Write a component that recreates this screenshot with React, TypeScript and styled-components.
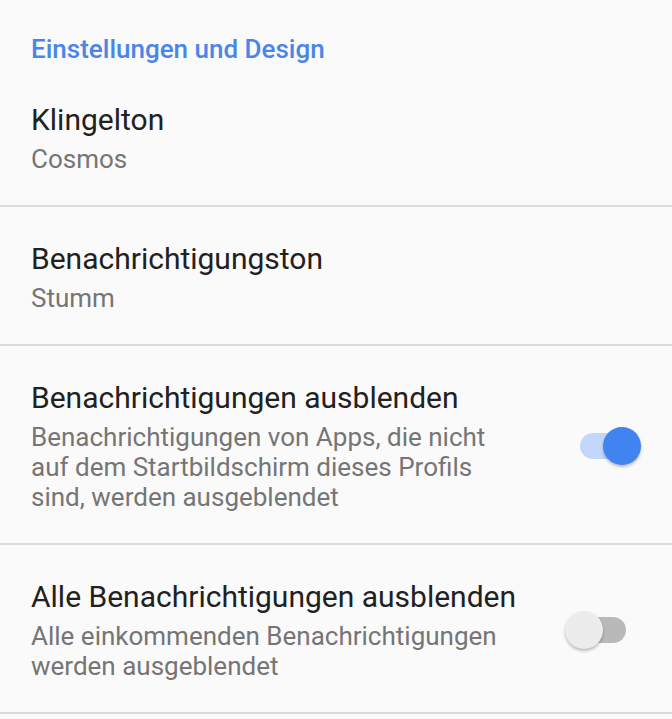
import React from 'react'
import styled, { createGlobalStyle } from 'styled-components'

const GlobalStyle = createGlobalStyle`
  html, body {
    margin: 0;
    padding: 0;
    background: #fafafa;
  }
  body {
    font-family: Roboto, "Noto Sans", Arial, sans-serif;
    -webkit-font-smoothing: antialiased;
  }
`

type Pref = {
  title: string
  summary: string[]
  toggle?: boolean
}

const prefs: Pref[] = [
  { title: 'Klingelton', summary: ['Cosmos'] },
  { title: 'Benachrichtigungston', summary: ['Stumm'] },
  {
    title: 'Benachrichtigungen ausblenden',
    summary: [
      'Benachrichtigungen von Apps, die nicht',
      'auf dem Startbildschirm dieses Profils',
      'sind, werden ausgeblendet',
    ],
    toggle: true,
  },
  {
    title: 'Alle Benachrichtigungen ausblenden',
    summary: ['Alle einkommenden Benachrichtigungen', 'werden ausgeblendet'],
    toggle: false,
  },
]

const App: React.FC = () => {
  return (
    <Page>
      <GlobalStyle />
      <CategoryTitle>Einstellungen und Design</CategoryTitle>
      {prefs.map((p) => (
        <Row key={p.title}>
          <TextBlock>
            <Title>{p.title}</Title>
            <Summary>
              {p.summary.map((line) => (
                <Line key={line}>{line}</Line>
              ))}
            </Summary>
          </TextBlock>
          {p.toggle !== undefined && (
            <Switch>
              <Track on={p.toggle} />
              <Thumb on={p.toggle} />
            </Switch>
          )}
        </Row>
      ))}
    </Page>
  )
}

export default App

const Page = styled.div`
  width: 672px;
  min-height: 719px;
  background: #fafafa;
  display: flex;
  flex-direction: column;
`
const CategoryTitle = styled.div`
  padding: 31px 31px 0;
  height: 37px;
  font-size: 26px;
  line-height: 37px;
  font-weight: 500;
  color: #4a86e8;
`
const Row = styled.div`
  display: flex;
  flex-direction: row;
  align-items: center;
  padding: 33px 46px 31px 31px;
  border-bottom: 2px solid #dcdcdc;
`
const TextBlock = styled.div`
  flex: 1;
  display: flex;
  flex-direction: column;
  gap: 5px;
`
const Title = styled.div`
  font-size: 30px;
  line-height: 38px;
  color: #212121;
`
const Summary = styled.div`
  display: flex;
  flex-direction: column;
  font-size: 26px;
  line-height: 30px;
  color: #757575;
`
const Line = styled.span`
  white-space: nowrap;
`
const Switch = styled.div`
  position: relative;
  width: 46px;
  height: 38px;
  flex-shrink: 0;
  display: flex;
  align-items: center;
`
const Track = styled.div<{ on: boolean }>`
  width: 46px;
  height: 26px;
  border-radius: 13px;
  background: ${(p) => (p.on ? '#c3d7fa' : '#b9b9b9')};
`
const Thumb = styled.div<{ on: boolean }>`
  position: absolute;
  top: 0;
  left: ${(p) => (p.on ? '23px' : '-15px')};
  width: 38px;
  height: 38px;
  border-radius: 50%;
  background: ${(p) => (p.on ? '#3f84f0' : '#ececec')};
  box-shadow: 0 2px 3px rgba(0, 0, 0, 0.25);
`
